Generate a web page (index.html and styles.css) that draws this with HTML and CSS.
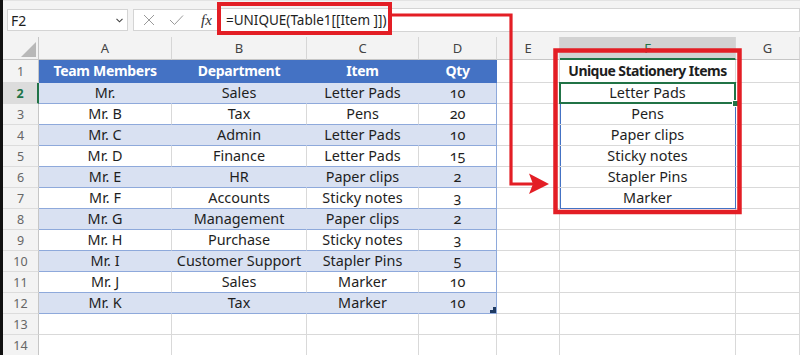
FILE: index.html
```html
<!DOCTYPE html>
<html lang="en">
<head>
   <meta charset="UTF-8">
   <title>UNIQUE function</title>
   <link rel="stylesheet" href="styles.css">
</head>

<body>

<div class="app">

   <div class="formula-bar">
      <div class="name-box">
         <span>F2</span>
         <svg class="chev" width="7" height="5" viewBox="0 0 7 5"><polyline points="0.5,0.8 3.5,3.8 6.5,0.8" fill="none" stroke="#444" stroke-width="1.1"/></svg>
      </div>
      <div class="fx-box">
         <svg width="12" height="12" viewBox="0 0 12 12"><path d="M1 1 L11 11 M11 1 L1 11" stroke="#9a9a9a" stroke-width="1"/></svg>
         <svg width="15" height="12" viewBox="0 0 15 12"><polyline points="1,6 5.5,10.5 14,1.5" fill="none" stroke="#9a9a9a" stroke-width="1"/></svg>
         <span class="fx">fx</span>
      </div>
      <div class="formula">=UNIQUE(Table1[[Item ]])</div>
   </div>

   <table class="grid">
      <colgroup>
         <col class="w-hd"><col class="w-a"><col class="w-b"><col class="w-c"><col class="w-d"><col class="w-e"><col class="w-f"><col class="w-g">
      </colgroup>
      <thead>
         <tr class="col-heads">
            <th class="corner"></th><th>A</th><th>B</th><th>C</th><th>D</th><th>E</th><th class="sel">F</th><th>G</th>
         </tr>
      </thead>
      <tbody>
         <tr class="r-first t-head">
            <th>1</th><td class="t">Team Members</td><td class="t">Department</td><td class="t">Item</td><td class="t edge">Qty</td><td></td><td class="u-head">Unique Stationery Items</td><td></td>
         </tr>
         <tr class="band">
            <th class="sel">2</th><td class="t">Mr.</td><td class="t">Sales</td><td class="t">Letter Pads</td><td class="t edge num">10</td><td></td><td class="spill active">Letter Pads</td><td></td>
         </tr>
         <tr class="plain">
            <th>3</th><td class="t">Mr. B</td><td class="t">Tax</td><td class="t">Pens</td><td class="t edge num">20</td><td></td><td class="spill">Pens</td><td></td>
         </tr>
         <tr class="band">
            <th>4</th><td class="t">Mr. C</td><td class="t">Admin</td><td class="t">Letter Pads</td><td class="t edge num">10</td><td></td><td class="spill">Paper clips</td><td></td>
         </tr>
         <tr class="plain">
            <th>5</th><td class="t">Mr. D</td><td class="t">Finance</td><td class="t">Letter Pads</td><td class="t edge num">15</td><td></td><td class="spill">Sticky notes</td><td></td>
         </tr>
         <tr class="band">
            <th>6</th><td class="t">Mr. E</td><td class="t">HR</td><td class="t">Paper clips</td><td class="t edge num">2</td><td></td><td class="spill">Stapler Pins</td><td></td>
         </tr>
         <tr class="plain">
            <th>7</th><td class="t">Mr. F</td><td class="t">Accounts</td><td class="t">Sticky notes</td><td class="t edge num">3</td><td></td><td class="spill last">Marker</td><td></td>
         </tr>
         <tr class="band">
            <th>8</th><td class="t">Mr. G</td><td class="t">Management</td><td class="t">Paper clips</td><td class="t edge num">2</td><td></td><td></td><td></td>
         </tr>
         <tr class="plain">
            <th>9</th><td class="t">Mr. H</td><td class="t">Purchase</td><td class="t">Sticky notes</td><td class="t edge num">3</td><td></td><td></td><td></td>
         </tr>
         <tr class="band">
            <th>10</th><td class="t">Mr. I</td><td class="t">Customer Support</td><td class="t">Stapler Pins</td><td class="t edge num">5</td><td></td><td></td><td></td>
         </tr>
         <tr class="plain">
            <th>11</th><td class="t">Mr. J</td><td class="t">Sales</td><td class="t">Marker</td><td class="t edge num">10</td><td></td><td></td><td></td>
         </tr>
         <tr class="band">
            <th>12</th><td class="t">Mr. K</td><td class="t">Tax</td><td class="t">Marker</td><td class="t edge num handle">10</td><td></td><td></td><td></td>
         </tr>
         <tr>
            <th>13</th><td></td><td></td><td></td><td></td><td></td><td></td><td></td>
         </tr>
         <tr>
            <th>14</th><td></td><td></td><td></td><td></td><td></td><td></td><td></td>
         </tr>
      </tbody>
   </table>

   <!-- red callouts drawn over the sheet -->
   <svg class="callout" width="800" height="355" viewBox="0 0 800 355">
      <rect x="219" y="4" width="171" height="29" fill="none" stroke="#e31e25" stroke-width="4"/>
      <polyline points="391,15 511,15 511,184 533,184" fill="none" stroke="#e31e25" stroke-width="3.2"/>
      <polygon points="529,173.5 549,184 529,194 533,184" fill="#e31e25"/>
      <rect x="555.5" y="50.5" width="184" height="161.5" fill="none" stroke="#e31e25" stroke-width="4.5"/>
   </svg>

</div>

</body>
</html>
```

FILE: styles.css
```css
html {
   height: 100%;
   overflow: hidden;
}

body {
   margin: 0;
   height: 100%;
   background: #fff;
   font-family: "Noto Sans", "Open Sans", sans-serif;
   color: #1e1e1e;
}

.app {
   position: relative;
   width: 797px;
   height: 355px;
   border-left: 3px solid #111;
   background: #fff;
}

/* formula bar */

.formula-bar {
   height: 37px;
   box-sizing: border-box;
   padding-top: 8px;
   display: flex;
   align-items: flex-start;
   background: #f3f3f3;
   border-top: 1px solid #e3e3e3;
}

.name-box {
   margin-left: 4px;
   width: 121px;
   height: 22px;
   box-sizing: border-box;
   border: 1px solid #d4d4d4;
   background: #fff;
   display: flex;
   align-items: center;
   justify-content: space-between;
   padding: 0 4px 0 3px;
   font-size: 14px;
}

.fx-box {
   margin-left: 5px;
   width: 84px;
   height: 22px;
   box-sizing: border-box;
   border: 1px solid #d4d4d4;
   border-right: none;
   background: #fff;
   display: flex;
   align-items: center;
   padding-left: 9px;
   gap: 14px;
}

.fx {
   font-family: "Liberation Serif", serif;
   font-style: italic;
   font-size: 15px;
   color: #333;
   margin-left: 3px;
}

.formula {
   flex: 1;
   height: 24px;
   box-sizing: border-box;
   margin-top: -1px;
   border: 1px solid #d4d4d4;
   background: #fff;
   padding-left: 8px;
   font-size: 13.5px;
   line-height: 22px;
}

/* sheet */

.grid {
   table-layout: fixed;
   border-collapse: separate;
   border-spacing: 0;
   width: 797px;
   background: #fff;
}

.w-hd { width: 36px; }
.w-a { width: 133px; }
.w-b { width: 135px; }
.w-c { width: 112px; }
.w-d { width: 78px; }
.w-e { width: 63px; }
.w-f { width: 176px; }
.w-g { width: 64px; }

.grid tr {
   height: 21px;
}

.grid tr.r-first {
   height: 23px;
}

.grid td {
   padding: 0;
   border-right: 1px solid #d9d9d9;
   border-bottom: 1px solid #d9d9d9;
   text-align: center;
   font-size: 14.4px;
   line-height: 18px;
   white-space: nowrap;
   overflow: hidden;
}

.grid th {
   padding: 0;
   font-weight: normal;
   background: #f3f3f3;
}

.col-heads th {
   height: 21px;
   border-right: 1px solid #d6d6d6;
   border-bottom: 1px solid #c6c6c6;
   color: #444;
   font-size: 13px;
}

.col-heads th.corner {
   position: relative;
   border-right-color: #c6c6c6;
}

.col-heads th.corner::after {
   content: "";
   position: absolute;
   right: 2px;
   bottom: 2px;
   width: 15px;
   height: 15px;
   background: #b8b8b8;
   clip-path: polygon(100% 0, 100% 100%, 0 100%);
}

.col-heads th.sel {
   background: #d2d2d2;
   color: #217346;
   border-bottom: 2px solid #217346;
}

tbody th {
   border-right: 1px solid #c6c6c6;
   border-bottom: 1px solid #dcdcdc;
   color: #666;
   font-size: 12.5px;
}

tbody th.sel {
   background: #dcdcdc;
   color: #217346;
   font-weight: bold;
   border-right: 2px solid #217346;
}

/* excel table */

.t-head td.t {
   background: #4472c4;
   color: #fff;
   font-weight: bold;
   font-size: 14px;
   letter-spacing: -0.3px;
   border-right-color: #4472c4;
   border-bottom-color: #4472c4;
}

.band td.t {
   background: #d9e1f2;
   border-right-color: #d9e1f2;
   border-bottom-color: #8ea9db;
}

.plain td.t {
   border-bottom-color: #8ea9db;
}

.grid td.t.edge {
   border-right-color: #8ea9db;
}

.t-head td.t.edge {
   border-right-color: #4472c4;
}

.num {
   font-variant-numeric: oldstyle-nums;
}

.handle {
   position: relative;
}

.handle::after {
   content: "";
   position: absolute;
   right: 0;
   bottom: 0;
   width: 6px;
   height: 6px;
   background: #1f3b63;
   clip-path: polygon(100% 0, 100% 100%, 0 100%, 0 50%, 50% 50%, 50% 0);
}

/* unique spill */

.grid td.u-head {
   font-weight: bold;
   font-size: 14px;
   letter-spacing: -0.55px;
}

.grid td.spill {
   border-right-color: #4472c4;
   box-shadow: inset 1px 0 0 #4472c4;
}

.grid td.spill.last {
   border-bottom-color: #4472c4;
}

.grid td.active {
   position: relative;
   overflow: visible;
}

.active::before {
   content: "";
   position: absolute;
   left: -1px;
   top: -1px;
   right: -1px;
   bottom: -1px;
   border: 2px solid #217346;
}

.active::after {
   content: "";
   position: absolute;
   right: -4px;
   bottom: -4px;
   width: 5px;
   height: 5px;
   background: #217346;
   border: 1px solid #fff;
}

.callout {
   position: absolute;
   top: 0;
   left: -3px;
   pointer-events: none;
}
```
